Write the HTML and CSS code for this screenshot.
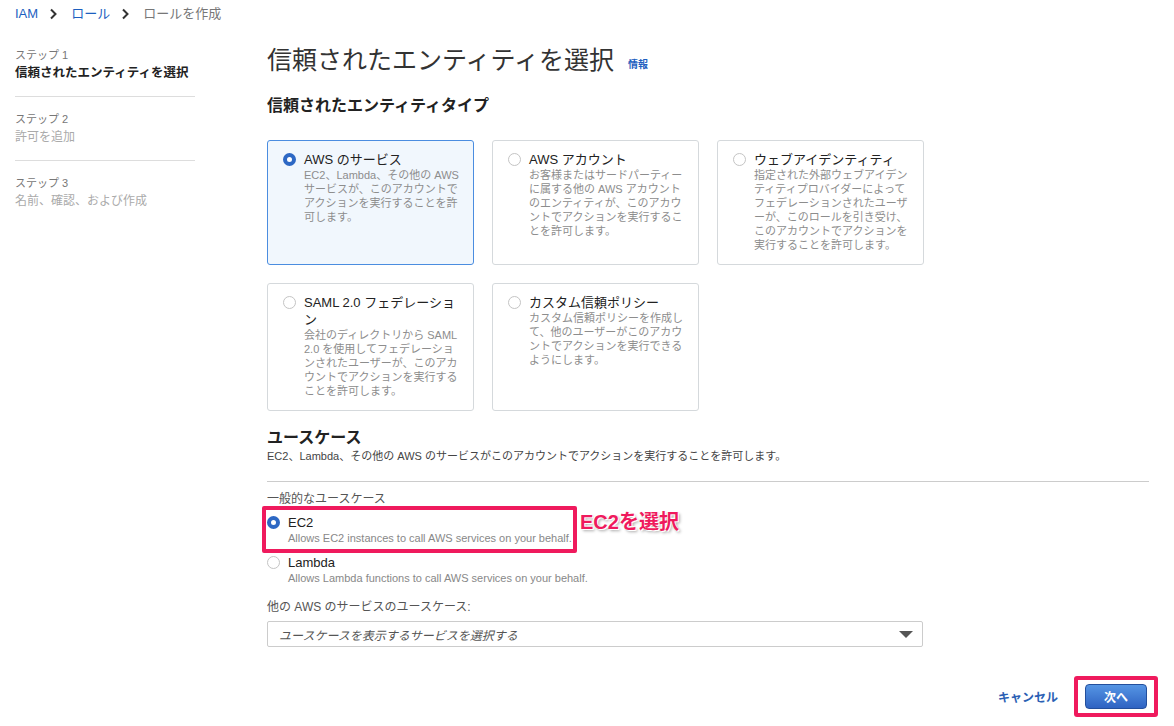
FILE: index.html
```html
<!DOCTYPE html>
<html lang="ja">
<head>
    <meta charset="UTF-8">
    <title>ロールを作成</title>
    <link rel="stylesheet" href="styles.css">
</head>
<body>
    <div class="breadcrumb">
        <a class="crumb-link">IAM</a>
        <svg class="crumb-sep" width="9" height="12" viewBox="0 0 9 12"><path d="M2 1.5 L6.5 6 L2 10.5" fill="none" stroke="#333" stroke-width="2"/></svg>
        <a class="crumb-link">ロール</a>
        <svg class="crumb-sep" width="9" height="12" viewBox="0 0 9 12"><path d="M2 1.5 L6.5 6 L2 10.5" fill="none" stroke="#333" stroke-width="2"/></svg>
        <span class="crumb-current">ロールを作成</span>
    </div>

    <div class="layout">
        <!-- Wizard steps -->
        <div class="sidebar">
            <div class="step">
                <div class="step-label">ステップ 1</div>
                <div class="step-title active">信頼されたエンティティを選択</div>
            </div>
            <div class="step">
                <div class="step-label">ステップ 2</div>
                <div class="step-title">許可を追加</div>
            </div>
            <div class="step last">
                <div class="step-label">ステップ 3</div>
                <div class="step-title">名前、確認、および作成</div>
            </div>
        </div>

        <div class="main">
            <h1>信頼されたエンティティを選択 <a class="info-link">情報</a></h1>

            <h2 class="section-title">信頼されたエンティティタイプ</h2>

            <div class="cards">
                <div class="card selected">
                    <span class="radio checked"></span>
                    <div class="card-body">
                        <div class="card-title">AWS のサービス</div>
                        <div class="card-desc">EC2、Lambda、その他の AWS サービスが、このアカウントでアクションを実行することを許可します。</div>
                    </div>
                </div>
                <div class="card">
                    <span class="radio"></span>
                    <div class="card-body">
                        <div class="card-title">AWS アカウント</div>
                        <div class="card-desc">お客様またはサードパーティーに属する他の AWS アカウントのエンティティが、このアカウントでアクションを実行することを許可します。</div>
                    </div>
                </div>
                <div class="card">
                    <span class="radio"></span>
                    <div class="card-body">
                        <div class="card-title">ウェブアイデンティティ</div>
                        <div class="card-desc">指定された外部ウェブアイデンティティプロバイダーによってフェデレーションされたユーザーが、このロールを引き受け、このアカウントでアクションを実行することを許可します。</div>
                    </div>
                </div>
                <div class="card">
                    <span class="radio"></span>
                    <div class="card-body">
                        <div class="card-title">SAML 2.0 フェデレーション</div>
                        <div class="card-desc">会社のディレクトリから SAML 2.0 を使用してフェデレーションされたユーザーが、このアカウントでアクションを実行することを許可します。</div>
                    </div>
                </div>
                <div class="card">
                    <span class="radio"></span>
                    <div class="card-body">
                        <div class="card-title">カスタム信頼ポリシー</div>
                        <div class="card-desc">カスタム信頼ポリシーを作成して、他のユーザーがこのアカウントでアクションを実行できるようにします。</div>
                    </div>
                </div>
            </div>

            <h2 class="section-title usecase-title">ユースケース</h2>
            <p class="section-desc">EC2、Lambda、その他の AWS のサービスがこのアカウントでアクションを実行することを許可します。</p>

            <div class="usecases">
                <div class="field-label">一般的なユースケース</div>

                <div class="option">
                    <span class="radio checked"></span>
                    <div>
                        <div class="option-title">EC2</div>
                        <div class="option-desc">Allows EC2 instances to call AWS services on your behalf.</div>
                    </div>
                    <span class="mark-box"></span>
                    <span class="mark-note">EC2を選択</span>
                </div>

                <div class="option">
                    <span class="radio"></span>
                    <div>
                        <div class="option-title">Lambda</div>
                        <div class="option-desc">Allows Lambda functions to call AWS services on your behalf.</div>
                    </div>
                </div>

                <div class="field-label other-label">他の AWS のサービスのユースケース:</div>
                <div class="select">
                    <span class="select-placeholder">ユースケースを表示するサービスを選択する</span>
                    <span class="select-arrow"></span>
                </div>
            </div>
        </div>
    </div>

    <div class="footer">
        <a class="cancel-link">キャンセル</a>
        <div class="next-wrap">
            <button class="next-button">次へ</button>
        </div>
    </div>
</body>
</html>
```

FILE: styles.css
```css
body {
    margin: 0;
    font-family: "Liberation Sans", "Noto Sans CJK JP", sans-serif;
    color: #222;
    background: #fff;
}

a {
    cursor: pointer;
}

/* Breadcrumb */
.breadcrumb {
    display: flex;
    align-items: center;
    height: 28px;
    padding-left: 15px;
    font-size: 13px;
    line-height: 16px;
}

.crumb-link {
    color: #1d5fbf;
}

.crumb-sep {
    margin: 0 13px 0 11px;
}

.crumb-current {
    color: #777;
}

.layout {
    display: flex;
}

/* Sidebar */
.sidebar {
    width: 180px;
    padding: 19px 0 0 15px;
    flex-shrink: 0;
}

.step {
    padding-bottom: 13px;
    margin-bottom: 14px;
    border-bottom: 1px solid #ddd;
}

.step.last {
    border-bottom: none;
}

.step-label {
    font-size: 11px;
    line-height: 16px;
    color: #777;
}

.step-title {
    font-size: 12px;
    line-height: 20px;
    color: #aaa;
    white-space: nowrap;
}

.step-title.active {
    font-size: 12.5px;
    font-weight: bold;
    color: #222;
}

/* Main */
.main {
    flex: 1;
    margin-left: 72px;
    padding: 16px 25px 0 0;
}

h1 {
    margin: 0;
    font-size: 25px;
    line-height: 32px;
    font-weight: normal;
    color: #333;
}

.info-link {
    font-size: 10px;
    font-weight: bold;
    color: #1d5fbf;
    margin-left: 7px;
    vertical-align: 1px;
}

.section-title {
    margin: 14px 0 0;
    font-size: 16px;
    line-height: 22px;
    font-weight: bold;
    color: #222;
}

.cards {
    display: grid;
    grid-template-columns: repeat(3, 207px);
    gap: 18px;
    margin-top: 23px;
}

.card {
    display: flex;
    gap: 8px;
    box-sizing: border-box;
    padding: 10px 12px 12px 15px;
    border: 1px solid #d5d9dc;
    border-radius: 3px;
    background: #fff;
}

.card.selected {
    background: #f1f7fd;
    border-color: #4b8de0;
}

.radio {
    flex-shrink: 0;
    width: 13px;
    height: 13px;
    margin-top: 2px;
    box-sizing: border-box;
    border: 1px solid #c4c4c4;
    border-radius: 50%;
    background: #fff;
}

.radio.checked {
    border: 4px solid #2d68c4;
}

.card-body {
    width: 157px;
}

.card-title {
    font-size: 13px;
    line-height: 17px;
    color: #222;
}

.card-desc {
    font-size: 11px;
    line-height: 14px;
    color: #8d8d8d;
}

.usecase-title {
    margin-top: 16px;
}

.section-desc {
    margin: 0;
    font-size: 11px;
    line-height: 15px;
    color: #444;
    padding-bottom: 17px;
    border-bottom: 1px solid #ccc;
}

.usecases {
    width: 656px;
}

.field-label {
    margin-top: 9px;
    font-size: 12px;
    line-height: 16px;
    color: #555;
}

.option {
    position: relative;
    display: flex;
    gap: 8px;
    margin-top: 7px;
}

.option + .option {
    margin-top: 8px;
}

.option-title {
    font-size: 13px;
    line-height: 17px;
    color: #222;
}

.option-desc {
    font-size: 11px;
    line-height: 15px;
    color: #888;
}

/* Annotation marks */
.mark-box {
    position: absolute;
    left: -5px;
    top: -8px;
    width: 315px;
    height: 47px;
    box-sizing: border-box;
    border: 4px solid #ef1a5d;
    border-radius: 2px;
}

.mark-note {
    position: absolute;
    left: 313px;
    top: -8px;
    font-size: 20px;
    font-weight: bold;
    color: #ef1a5d;
    white-space: nowrap;
    text-shadow: 1px 1px 0 #fff, -1px -1px 0 #fff, 2px 2px 3px rgba(0,0,0,0.35);
}

.other-label {
    margin-top: 13px;
}

.select {
    display: flex;
    align-items: center;
    justify-content: space-between;
    box-sizing: border-box;
    height: 26px;
    margin-top: 6px;
    padding: 0 9px 0 11px;
    border: 1px solid #ccc;
    border-radius: 2px;
}

.select-placeholder {
    font-size: 12px;
    font-style: italic;
    color: #555;
}

.select-arrow {
    width: 0;
    height: 0;
    border-left: 7px solid transparent;
    border-right: 7px solid transparent;
    border-top: 7px solid #555;
}

/* Footer */
.footer {
    display: flex;
    justify-content: flex-end;
    align-items: center;
    gap: 16px;
    margin-top: 29px;
    padding-right: 16px;
}

.cancel-link {
    font-size: 12px;
    font-weight: bold;
    color: #2b5fb4;
}

.next-wrap {
    padding: 4px 7px;
    border: 4px solid #ef1a5d;
    border-radius: 3px;
}

.next-button {
    display: block;
    width: 62px;
    height: 25px;
    font-family: inherit;
    font-size: 12px;
    font-weight: bold;
    color: #fff;
    background: linear-gradient(#5595e4, #2f63c2);
    border: 1px solid #234f9c;
    border-radius: 4px;
    cursor: pointer;
}
```
